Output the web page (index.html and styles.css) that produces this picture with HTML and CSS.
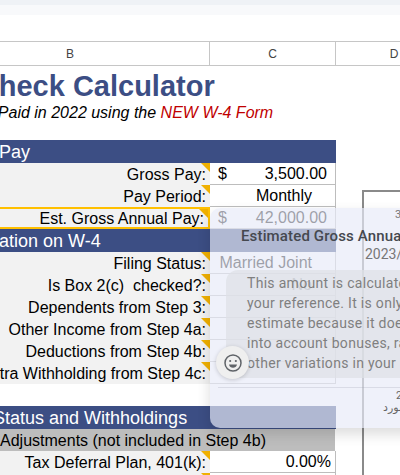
FILE: index.html
```html
<!DOCTYPE html>
<html lang="en">
<head>
<meta charset="utf-8">
<title>Paycheck Calculator</title>
<link rel="stylesheet" href="styles.css">
</head>
<body>
<div class="page">
  <div class="band-a"></div>
  <div class="band-b"></div>
  <div class="gap"></div>
  <div class="sheet">
    <div class="colheads">
      <div class="colhead col-b">B</div>
      <div class="colhead col-c">C</div>
      <div class="colhead col-d">D</div>
    </div>
    <div class="sheet-body">
      <div class="calc">
        <div class="title">Paycheck Calculator</div>
        <div class="subtitle">Paychecks Paid in 2022 using the <span class="red">NEW W-4 Form</span></div>
        <div class="spacer"></div>
        <div class="section sec-pay">Regular Pay</div>
        <div class="row"><div class="label">Gross Pay:</div><div class="value money"><span>$</span><span>3,500.00</span></div></div>
        <div class="row"><div class="label">Pay Period:</div><div class="value choice">Monthly</div></div>
        <div class="row row-est"><div class="label">Est. Gross Annual Pay:</div><div class="value money"><span>$</span><span>42,000.00</span></div></div>
        <div class="section sec-info">Information on W-4</div>
        <div class="row"><div class="label">Filing Status:</div><div class="value choice">Married Joint</div></div>
        <div class="row"><div class="label">Is Box 2(c)&nbsp; checked?:</div><div class="value choice">No</div></div>
        <div class="row"><div class="label">Dependents from Step 3:</div><div class="value"></div></div>
        <div class="row"><div class="label">Other Income from Step 4a:</div><div class="value"></div></div>
        <div class="row"><div class="label">Deductions from Step 4b:</div><div class="value"></div></div>
        <div class="row"><div class="label">Extra Withholding from Step 4c:</div><div class="value"></div></div>
        <div class="blank"></div>
        <div class="section sec-status">Filing Status and Withholdings</div>
        <div class="subhead">Adjustments (not included in Step 4b)</div>
        <div class="row"><div class="label">Tax Deferral Plan, 401(k):</div><div class="value percent">0.00%</div></div>
        <div class="row"><div class="label"></div><div class="value"></div></div>
      </div>
      <div class="side"><div class="chart"></div></div>
    </div>
  </div>
</div>
<div class="panel">
  <div class="p-num">3</div>
  <div class="p-title">Estimated Gross Annual Pay</div>
  <div class="p-date">2023/01/01</div>
  <div class="bubble">
    <span>This amount is calculated for</span>
    <span>your reference. It is only an</span>
    <span>estimate because it does not take</span>
    <span>into account bonuses, raises, or</span>
    <span>other variations in your pay.</span>
  </div>
  <div class="p-rule"></div>
  <div class="p-foot"><span>2</span><span class="arabic" dir="rtl">مورد</span></div>
  <button class="emoji" aria-label="Add reaction">
    <svg viewBox="0 0 24 24" width="20" height="20" fill="none" stroke="#5f6368" stroke-width="1.8">
      <circle cx="12" cy="12" r="9.6"/>
      <circle cx="8.6" cy="9.6" r="1.3" fill="#5f6368" stroke="none"/>
      <circle cx="15.4" cy="9.6" r="1.3" fill="#5f6368" stroke="none"/>
      <path d="M7.2 13.8h9.6c-.5 2.6-2.5 4-4.8 4s-4.300-1.400-4.800-4z" fill="#5f6368" stroke="none"/>
    </svg>
  </button>
</div>
</body>
</html>
```
FILE: styles.css
```css
* { box-sizing: border-box; }
html, body { margin: 0; padding: 0; height: 100%; overflow: hidden; background: #fff; }
body { font-family: "Liberation Sans", Arial, sans-serif; color: #000; }
.page { width: 400px; height: 475px; overflow: hidden; display: flex; flex-direction: column; }
.band-a { height: 5px; background: #eff2f6; flex: none; }
.band-b { height: 10px; background: #f8f9fb; flex: none; }
.gap { height: 26px; flex: none; }
.sheet { width: 540px; margin-left: -69px; flex: none; height: 434px; display: flex; flex-direction: column; }
.colheads { display: flex; height: 25px; border-top: 1px solid #c6c6c6; border-bottom: 1px solid #c6c6c6; flex: none; }
.colhead { display: flex; align-items: center; justify-content: center; font-size: 12px; color: #444; }
.col-b { width: 279px; border-right: 1px solid #c6c6c6; }
.col-c { width: 126px; border-right: 1px solid #c6c6c6; }
.col-d { width: 116px; }
.sheet-body { display: flex; flex: 1; }
.calc { width: 405px; flex: none; }
.side { flex: 1; padding-top: 124px; }
.chart { margin-left: 26px; height: 100%; border-top: 2px solid #8a8a8a; border-left: 2px solid #8a8a8a; }
.title { height: 35px; padding-top: 2px; font-size: 29px; font-weight: 700; color: #3c4e84; line-height: 36px; white-space: nowrap; }
.subtitle { height: 24px; margin-left: -15px; font-size: 16px; font-style: italic; line-height: 24px; white-space: nowrap; }
.red { color: #c00000; }
.spacer { height: 15px; }
.section { height: 23px; background: #3c4e84; color: #fff; font-size: 18px; line-height: 25px; white-space: nowrap; }
.sec-pay { padding-left: 0; }
.sec-info { padding-left: 17px; }
.sec-status { padding-left: 14px; }
.row { display: flex; height: 22px; }
.label { position: relative; width: 279px; flex: none; background: #f2f2f2; text-align: right; padding-right: 4px; font-size: 16px; line-height: 23px; white-space: nowrap; }
.label::after { content: ""; position: absolute; top: 0; right: 0; border-style: solid; border-width: 0 9px 9px 0; border-color: transparent #f0b000 transparent transparent; }
.value { width: 126px; flex: none; border-bottom: 1px solid #bdbdbd; border-right: 1px solid #bdbdbd; font-size: 16px; line-height: 22px; background: #fff; }
.money { display: flex; justify-content: space-between; padding: 0 8px; }
.choice { text-align: right; padding-right: 23px; }
.percent { text-align: right; padding-right: 4px; }
.row-est .label { border-top: 2px solid #ffc000; border-bottom: 2px solid #ffc000; border-right: 2px solid #ffc000; line-height: 20px; }
.blank { height: 22px; }
.subhead { height: 22px; width: 404px; background: #bdbdbd; text-align: center; font-size: 16px; line-height: 23px; white-space: nowrap; }
.panel { position: absolute; left: 210px; top: 208px; width: 260px; height: 220px; background: rgba(231,235,248,.68); border-radius: 10px; box-shadow: 0 6px 14px rgba(0,0,0,.14); font-family: Roboto, sans-serif; color: #444; }
.p-num { font-size: 11px; line-height: 14px; padding: 0 0 0 185px; color: #777; }
.p-title { font-size: 15px; font-weight: 500; line-height: 18px; margin-top: 5px; padding-left: 31px; letter-spacing: .15px; white-space: nowrap; color: #45484f; }
.p-date { font-size: 14px; line-height: 16px; padding-left: 155px; margin-top: 1px; color: #777; white-space: nowrap; }
.bubble { margin: 8px 0 0 16px; height: 108px; padding: 3px 0 0 21px; border-radius: 12px; background: rgba(222,224,230,.72); color: #7f7f7f; font-size: 14px; letter-spacing: .3px; line-height: 20px; }
.bubble span { display: block; white-space: nowrap; }
.p-rule { margin: 9px 0 0 8px; height: 1px; background: rgba(150,155,170,.25); }
.p-foot { display: flex; flex-direction: column; font-size: 11px; line-height: 11px; padding: 2px 0 0 186px; color: #666; }
.arabic { font-family: "Noto Sans", "DejaVu Sans", sans-serif; white-space: nowrap; text-align: left; margin-left: -13px; }
.emoji { position: absolute; left: 6px; top: 138px; width: 33px; height: 33px; border: 0; padding: 0; border-radius: 50%; background: #efefef; box-shadow: 0 1px 4px rgba(0,0,0,.18); display: flex; align-items: center; justify-content: center; }
```
